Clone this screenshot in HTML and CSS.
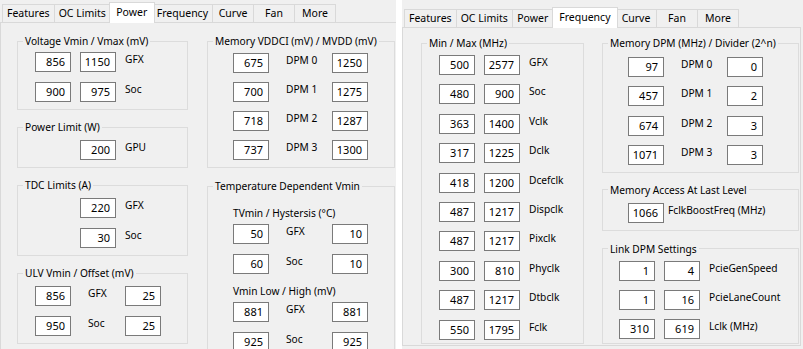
FILE: index.html
```html
<!DOCTYPE html>
<html lang="en">

<head>
    <meta charset="UTF-8">
    <meta name="viewport" content="width=device-width, initial-scale=1.0">
    <title>PowerTool</title>
    <link rel="stylesheet" href="styles.css">
</head>

<body>
    <div class="window" id="power">
        <div class="tabs">
            <div class="tab">Features</div>
            <div class="tab">OC Limits</div>
            <div class="tab active">Power</div>
            <div class="tab">Frequency</div>
            <div class="tab">Curve</div>
            <div class="tab">Fan</div>
            <div class="tab">More</div>
        </div>
        <div class="page">
            <div class="col" id="power_left">
                <fieldset class="grp" id="voltage">
                    <legend>Voltage Vmin / Vmax (mV)</legend>
                    <div class="rows">
                        <div class="row"><span class="num">856</span><span class="num">1150</span><span class="lbl">GFX</span></div>
                        <div class="row"><span class="num">900</span><span class="num">975</span><span class="lbl">Soc</span></div>
                    </div>
                </fieldset>
                <fieldset class="grp" id="power_limit">
                    <legend>Power Limit (W)</legend>
                    <div class="rows indent">
                        <div class="row"><span class="num">200</span><span class="lbl">GPU</span></div>
                    </div>
                </fieldset>
                <fieldset class="grp" id="tdc">
                    <legend>TDC Limits (A)</legend>
                    <div class="rows indent">
                        <div class="row"><span class="num">220</span><span class="lbl">GFX</span></div>
                        <div class="row"><span class="num">30</span><span class="lbl">Soc</span></div>
                    </div>
                </fieldset>
                <fieldset class="grp" id="ulv">
                    <legend>ULV Vmin / Offset (mV)</legend>
                    <div class="rows">
                        <div class="row"><span class="num">856</span><span class="lbl short">GFX</span><span class="num">25</span></div>
                        <div class="row"><span class="num">950</span><span class="lbl short">Soc</span><span class="num">25</span></div>
                    </div>
                </fieldset>
            </div>
            <div class="col" id="power_right">
                <fieldset class="grp" id="mem_volt">
                    <legend>Memory VDDCI (mV) / MVDD (mV)</legend>
                    <div class="rows wide">
                        <div class="row"><span class="num">675</span><span class="lbl mid">DPM 0</span><span class="num">1250</span></div>
                        <div class="row"><span class="num">700</span><span class="lbl mid">DPM 1</span><span class="num">1275</span></div>
                        <div class="row"><span class="num">718</span><span class="lbl mid">DPM 2</span><span class="num">1287</span></div>
                        <div class="row"><span class="num">737</span><span class="lbl mid">DPM 3</span><span class="num">1300</span></div>
                    </div>
                </fieldset>
                <fieldset class="grp" id="temp">
                    <legend>Temperature Dependent Vmin</legend>
                    <p class="sub">TVmin / Hystersis (°C)</p>
                    <div class="rows wide">
                        <div class="row"><span class="num">50</span><span class="lbl mid">GFX</span><span class="num">10</span></div>
                        <div class="row"><span class="num">60</span><span class="lbl mid">Soc</span><span class="num">10</span></div>
                    </div>
                    <p class="sub">Vmin Low / High (mV)</p>
                    <div class="rows wide">
                        <div class="row"><span class="num">881</span><span class="lbl mid">GFX</span><span class="num">881</span></div>
                        <div class="row"><span class="num">925</span><span class="lbl mid">Soc</span><span class="num">925</span></div>
                    </div>
                </fieldset>
            </div>
        </div>
    </div>

    <div class="window" id="frequency">
        <div class="tabs">
            <div class="tab">Features</div>
            <div class="tab">OC Limits</div>
            <div class="tab">Power</div>
            <div class="tab active">Frequency</div>
            <div class="tab">Curve</div>
            <div class="tab">Fan</div>
            <div class="tab">More</div>
        </div>
        <div class="page">
            <div class="col" id="freq_left">
                <fieldset class="grp" id="minmax">
                    <legend>Min / Max (MHz)</legend>
                    <div class="rows">
                        <div class="row"><span class="num">500</span><span class="num">2577</span><span class="lbl">GFX</span></div>
                        <div class="row"><span class="num">480</span><span class="num">900</span><span class="lbl">Soc</span></div>
                        <div class="row"><span class="num">363</span><span class="num">1400</span><span class="lbl">Vclk</span></div>
                        <div class="row"><span class="num">317</span><span class="num">1225</span><span class="lbl">Dclk</span></div>
                        <div class="row"><span class="num">418</span><span class="num">1200</span><span class="lbl">Dcefclk</span></div>
                        <div class="row"><span class="num">487</span><span class="num">1217</span><span class="lbl">Dispclk</span></div>
                        <div class="row"><span class="num">487</span><span class="num">1217</span><span class="lbl">Pixclk</span></div>
                        <div class="row"><span class="num">300</span><span class="num">810</span><span class="lbl">Phyclk</span></div>
                        <div class="row"><span class="num">487</span><span class="num">1217</span><span class="lbl">Dtbclk</span></div>
                        <div class="row"><span class="num">550</span><span class="num">1795</span><span class="lbl">Fclk</span></div>
                    </div>
                </fieldset>
            </div>
            <div class="col" id="freq_right">
                <fieldset class="grp" id="mem_dpm">
                    <legend>Memory DPM (MHz) / Divider (2^n)</legend>
                    <div class="rows wide">
                        <div class="row"><span class="num">97</span><span class="lbl mid">DPM 0</span><span class="num">0</span></div>
                        <div class="row"><span class="num">457</span><span class="lbl mid">DPM 1</span><span class="num">2</span></div>
                        <div class="row"><span class="num">674</span><span class="lbl mid">DPM 2</span><span class="num">3</span></div>
                        <div class="row"><span class="num">1071</span><span class="lbl mid">DPM 3</span><span class="num">3</span></div>
                    </div>
                </fieldset>
                <fieldset class="grp" id="mem_access">
                    <legend>Memory Access At Last Level</legend>
                    <div class="rows wide">
                        <div class="row tight"><span class="num">1066</span><span class="lbl">FclkBoostFreq (MHz)</span></div>
                    </div>
                </fieldset>
                <fieldset class="grp" id="link">
                    <legend>Link DPM Settings</legend>
                    <div class="rows">
                        <div class="row"><span class="num">1</span><span class="num">4</span><span class="lbl">PcieGenSpeed</span></div>
                        <div class="row"><span class="num">1</span><span class="num">16</span><span class="lbl">PcieLaneCount</span></div>
                        <div class="row"><span class="num">310</span><span class="num">619</span><span class="lbl">Lclk (MHz)</span></div>
                    </div>
                </fieldset>
            </div>
        </div>
    </div>
</body>

</html>
```

FILE: styles.css
```css
body {
    margin: 0;
    height: 349px;
    overflow: hidden;
    display: flex;
    gap: 6px;
    background-color: white;
    font-family: "Noto Sans", "Open Sans", sans-serif;
    font-size: 10.2px;
    color: black;
}

.window {
    display: flex;
    flex-direction: column;
    background-color: #f0f0f0;
    overflow: hidden;
}

#power {
    width: 396px;
}

#frequency {
    flex: 1;
}

/* tab strip */

.tabs {
    display: flex;
    align-items: flex-end;
    padding-left: 2px;
    flex-shrink: 0;
}

#power .tabs {
    height: 22px;
}

#frequency .tabs {
    height: 27px;
}

.tab {
    box-sizing: border-box;
    height: 18px;
    min-width: 42px;
    padding: 0 4px;
    margin-left: -1px;
    border: 1px solid #d9d9d9;
    border-bottom: none;
    background-color: #f0f0f0;
    text-align: center;
    font-size: 10.5px;
    line-height: 17px;
    white-space: nowrap;
}

.tab:first-child {
    margin-left: 0;
}

.tab.active {
    position: relative;
    z-index: 1;
    height: 21px;
    margin: 0 -2px -1px -2px;
    padding: 0 6.5px;
    background-color: white;
    line-height: 18px;
}

/* page */

.page {
    display: flex;
    gap: 19px;
    border: 1px solid #d9d9d9;
    background-color: #f0f0f0;
}

#power .page {
    width: 420px;
    height: 400px;
    flex-shrink: 0;
    padding: 11px 0 0 16px;
}

#frequency .page {
    flex: 1;
    gap: 18px;
    margin: 0 2px 3px 0;
    padding: 8px 0 0 18px;
}

.col {
    display: flex;
    flex-direction: column;
    gap: 10px;
}

#power_left {
    width: 171px;
}

#power_right {
    width: 188px;
    gap: 11px;
}

#freq_left {
    width: 163px;
}

#freq_right {
    width: 197px;
}

/* group boxes */

.grp {
    margin: 0;
    padding: 6px 0 7px;
    border: 1px solid #dcdcdc;
    min-width: 0;
}

.grp legend {
    margin-left: 5px;
    padding: 0 2px;
    line-height: 14px;
    white-space: nowrap;
}

#voltage {
    padding-top: 4px;
}

#mem_volt {
    padding-top: 5px;
}

#minmax {
    padding: 5px 0 3px;
}

#mem_dpm {
    padding-top: 7px;
}

#link {
    margin-top: 1px;
    padding: 5px 0 4px;
}

.rows {
    display: flex;
    flex-direction: column;
    gap: 10px;
    padding-left: 17px;
}

.rows.indent {
    padding-left: 62px;
}

.rows.wide {
    padding-left: 25px;
}

#mem_volt .rows,
#link .rows {
    gap: 9px;
}

#minmax .rows {
    gap: 9.4px;
}

#mem_dpm .rows {
    gap: 9.3px;
}

#link .rows {
    padding-left: 16px;
}

.row {
    display: flex;
    gap: 9px;
    height: 20px;
}

.row.tight {
    gap: 4px;
}

.num {
    box-sizing: border-box;
    width: 36px;
    height: 20px;
    padding-right: 5px;
    border: 1px solid #7a7a7a;
    background-color: white;
    text-align: right;
    font-size: 11px;
    line-height: 18px;
}

.lbl {
    line-height: 14px;
    white-space: nowrap;
}

.lbl.mid {
    box-sizing: border-box;
    width: 45px;
    padding-left: 8px;
}

.lbl.short {
    box-sizing: border-box;
    width: 36px;
    padding-left: 8px;
}

.sub {
    margin: 7px 0 4px 25px;
    line-height: 14px;
}

.sub ~ .sub {
    margin-top: 10px;
}
```
